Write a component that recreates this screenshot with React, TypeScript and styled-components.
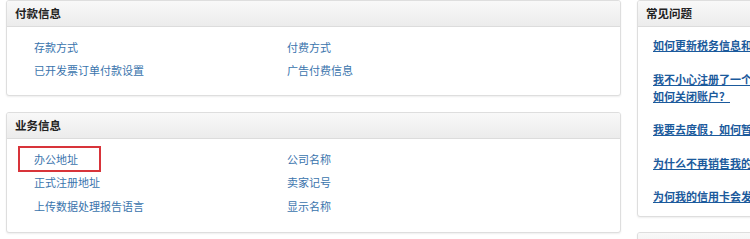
import styled, { createGlobalStyle } from "styled-components";

const GlobalStyle = createGlobalStyle`
  html, body {
    margin: 0;
    padding: 0;
    background: #fff;
    overflow: hidden;
  }
  body {
    font-family: "Liberation Sans", "Noto Sans CJK SC", sans-serif;
    font-size: 11px;
    color: #333;
  }
`;

const Page = styled.div`
  display: flex;
  align-items: flex-start;
  gap: 16px;
  padding: 0 0 0 6px;
  width: 900px;
`;

const MainColumn = styled.div`
  display: flex;
  flex-direction: column;
  gap: 16px;
  width: 615px;
  flex: none;
`;

const SideColumn = styled.div`
  display: flex;
  flex-direction: column;
  gap: 15px;
  width: 200px;
  flex: none;
`;

const Panel = styled.section`
  background: #fff;
  border: 1px solid #dedede;
  border-radius: 3px;
  box-shadow: 0 1px 2px rgba(0, 0, 0, 0.07);
  overflow: hidden;
`;

const PanelHeader = styled.h3`
  margin: 0;
  height: 25px;
  line-height: 26px;
  padding: 0 8px;
  font-size: 11.5px;
  font-weight: bold;
  color: #222;
  background: linear-gradient(#f8f8f8, #ececec);
  border-bottom: 1px solid #dcdcdc;
`;

const LinkGrid = styled.div<{ $bottom: number }>`
  display: grid;
  grid-template-columns: 253px 1fr;
  padding: 8px 0 ${(p) => p.$bottom}px 27px;
`;

const LinkCell = styled.div<{ $marked?: boolean }>`
  position: relative;
  height: 23.5px;
  display: flex;
  align-items: center;
  ${(p) =>
    p.$marked &&
    `
    &::after {
      content: "";
      position: absolute;
      top: -1px;
      bottom: -1px;
      left: -16px;
      width: 83px;
      border: 2px solid #d8343a;
      box-sizing: border-box;
    }
  `}
`;

const SettingLink = styled.a`
  color: #3a74ad;
  text-decoration: none;
  cursor: pointer;
`;

const FaqList = styled.ul`
  list-style: none;
  margin: 0;
  padding: 11px 0 10px 15px;
  display: flex;
  flex-direction: column;
  gap: 16.5px;
`;

const FaqItem = styled.li`
  line-height: 17px;
  white-space: nowrap;
`;

const FaqLink = styled.a`
  color: #1b5a9c;
  text-decoration: underline;
  font-weight: 600;
  cursor: pointer;
`;

const StubPanel = styled(Panel)`
  height: 30px;
`;

const payment = [
  ["存款方式", "付费方式"],
  ["已开发票订单付款设置", "广告付费信息"],
];

const business = [
  ["办公地址", "公司名称"],
  ["正式注册地址", "卖家记号"],
  ["上传数据处理报告语言", "显示名称"],
];

const faqs = [
  ["如何更新税务信息和法律实体信息？"],
  ["我不小心注册了一个账户，", "如何关闭账户？"],
  ["我要去度假，如何暂停销售？"],
  ["为什么不再销售我的商品？"],
  ["为何我的信用卡会发生扣款？"],
];

export default function App() {
  return (
    <>
      <GlobalStyle />
      <Page>
        <MainColumn>
          <Panel>
            <PanelHeader>付款信息</PanelHeader>
            <LinkGrid $bottom={13}>
              {payment.flat().map((label) => (
                <LinkCell key={label}>
                  <SettingLink>{label}</SettingLink>
                </LinkCell>
              ))}
            </LinkGrid>
          </Panel>
          <Panel>
            <PanelHeader>业务信息</PanelHeader>
            <LinkGrid $bottom={14}>
              {business.flat().map((label) => (
                <LinkCell key={label} $marked={label === "办公地址"}>
                  <SettingLink>{label}</SettingLink>
                </LinkCell>
              ))}
            </LinkGrid>
          </Panel>
        </MainColumn>
        <SideColumn>
          <Panel>
            <PanelHeader>常见问题</PanelHeader>
            <FaqList>
              {faqs.map((lines) => (
                <FaqItem key={lines[0]}>
                  <FaqLink>
                    {lines.map((line, i) => (
                      <span key={line}>
                        {i > 0 && <br />}
                        {line}
                      </span>
                    ))}
                  </FaqLink>
                </FaqItem>
              ))}
            </FaqList>
          </Panel>
          <StubPanel>
            <PanelHeader>&nbsp;</PanelHeader>
          </StubPanel>
        </SideColumn>
      </Page>
    </>
  );
}
